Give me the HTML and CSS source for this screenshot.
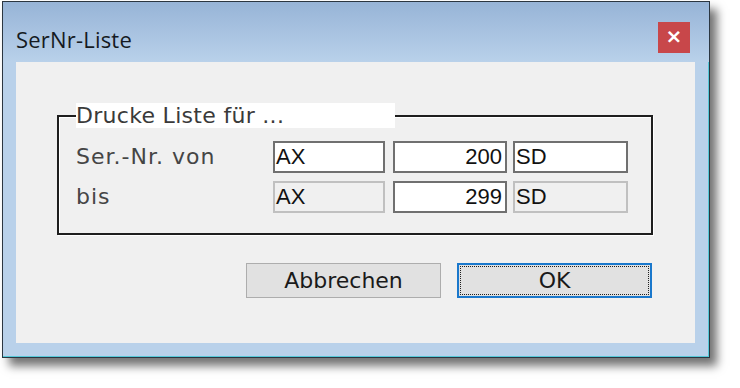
FILE: index.html
```html
<!DOCTYPE html>
<html lang="de">
<head>
<meta charset="utf-8">
<title>SerNr-Liste</title>
<link rel="stylesheet" href="styles.css">
</head>
<body>
<div class="window">
  <div class="titlebar">
    <span class="title">SerNr-Liste</span>
    <span class="close">×</span>
  </div>
  <div class="content">
    <fieldset class="group">
      <legend class="legend">Drucke Liste für ...</legend>
      <div class="rows">
        <span class="label">Ser.-Nr. von</span>
        <span class="field">AX</span>
        <span class="field num">200</span>
        <span class="field">SD</span>
        <span class="label">bis</span>
        <span class="field disabled">AX</span>
        <span class="field num">299</span>
        <span class="field disabled">SD</span>
      </div>
    </fieldset>
    <div class="buttons">
      <span class="btn">Abbrechen</span>
      <span class="btn default"><span class="focus">OK</span></span>
    </div>
  </div>
</div>
</body>
</html>
```

FILE: styles.css
```css
html, body {
  margin: 0;
  padding: 0;
  background: #ffffff;
}
body {
  width: 740px;
  height: 388px;
  overflow: hidden;
}
.window {
  box-sizing: border-box;
  margin: 1px 0 0 2px;
  width: 708px;
  height: 357px;
  border: 1px solid #2b3641;
  background: #b9d1ea;
  box-shadow: inset 0 -1px 0 #55c8d8, inset -1px 0 0 #55c8d8, 7px 8px 9px rgba(0, 0, 0, 0.55);
  display: flex;
  flex-direction: column;
  padding: 0 14px 14px 13px;
}
.titlebar {
  box-sizing: border-box;
  height: 60px;
  margin: 0 -14px 0 -13px;
  padding: 10px 19px 0 13px;
  background: linear-gradient(#97b4d7, #b9d1ea);
  display: flex;
  align-items: center;
  justify-content: space-between;
}
.title {
  font-family: "Open Sans", "Noto Sans", sans-serif;
  font-size: 22px;
  letter-spacing: 0.2px;
  color: #151a22;
  margin-top: 3px;
}
.close {
  width: 32px;
  height: 31px;
  background: #c8474a;
  color: #ffffff;
  font-family: "DejaVu Sans", sans-serif;
  font-weight: bold;
  font-size: 20px;
  line-height: 29px;
  text-align: center;
}
.content {
  flex: 1;
  background: #f0f0f0;
  padding: 41px 0 0 41px;
}
.group {
  box-sizing: border-box;
  width: 596px;
  margin: 0;
  padding: 0;
  border: 2px solid #1e1e1e;
  box-shadow: 1px 1px 0 #ffffff, inset 1px 1px 0 #ffffff;
  min-inline-size: 0;
}
.legend {
  box-sizing: border-box;
  width: 319px;
  height: 25px;
  margin-left: 17px;
  padding: 0;
  background: #ffffff;
  font-family: "DejaVu Sans", sans-serif;
  font-size: 22px;
  letter-spacing: 0.3px;
  line-height: 25px;
  color: #3a3a3a;
}
.rows {
  display: grid;
  grid-template-columns: 189px 112px 114px 113px;
  grid-auto-rows: 32px;
  column-gap: 8px;
  row-gap: 8px;
  padding: 13px 0 20px 17px;
}
.rows .field:nth-child(4n) {
  margin-left: -2px;
}
.label {
  font-family: "DejaVu Sans", sans-serif;
  font-size: 22px;
  letter-spacing: 1px;
  line-height: 32px;
  color: #454545;
}
.field {
  box-sizing: border-box;
  border: 2px solid #707070;
  background: #ffffff;
  font-family: "Liberation Sans", Arial, sans-serif;
  font-size: 22px;
  line-height: 28px;
  color: #111111;
  padding: 0 3px 0 1px;
}
.field.num {
  text-align: right;
}
.field.disabled {
  background: #f0f0f0;
  border-color: #c0c0c0;
}
.buttons {
  display: flex;
  justify-content: flex-end;
  gap: 16px;
  width: 596px;
  margin-top: 28px;
}
.btn {
  box-sizing: border-box;
  width: 195px;
  height: 35px;
  border: 1px solid #adadad;
  background: #e1e1e1;
  font-family: "DejaVu Sans", sans-serif;
  font-size: 22px;
  line-height: 33px;
  color: #1a1a1a;
  text-align: center;
}
.btn.default {
  border: 2px solid #1a78cc;
  padding: 1px;
  margin-right: 1px;
}
.focus {
  display: block;
  height: 100%;
  box-sizing: border-box;
  border: 1px dotted #202020;
  line-height: 27px;
}
```
